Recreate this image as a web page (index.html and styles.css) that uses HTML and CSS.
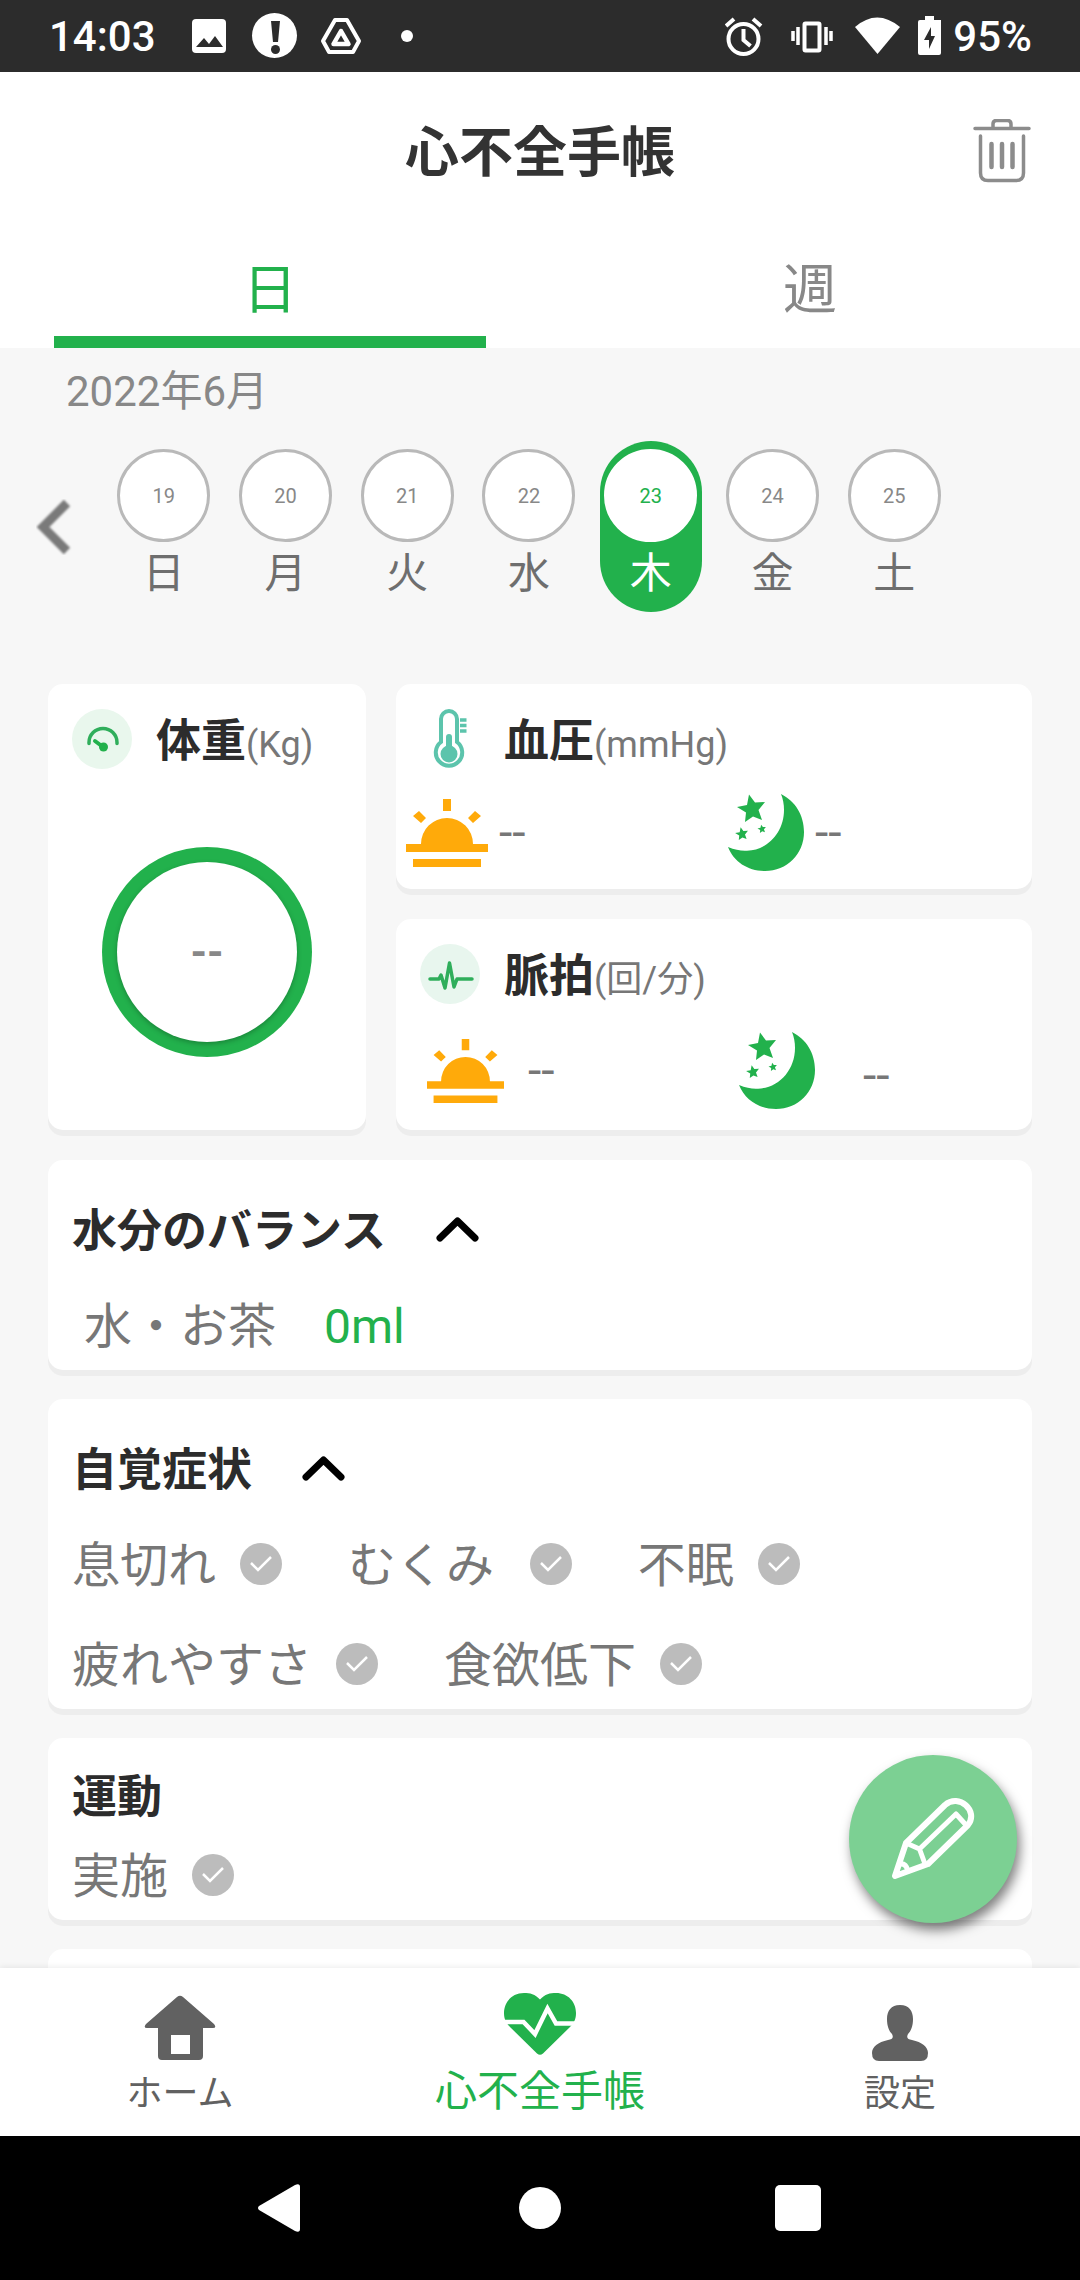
FILE: index.html
```html
<!DOCTYPE html>
<html lang="ja">
<head>
<meta charset="utf-8">
<meta name="viewport" content="width=device-width, initial-scale=1">
<title>心不全手帳</title>
<link rel="stylesheet" href="styles.css">
</head>
<body>
<svg class="defs" aria-hidden="true">
  <symbol id="sun" viewBox="0 0 82 68">
    <path fill="#ffaa0a" d="M37 0h8v12h-8zM7 17l6-5 7 7-5 5zM75 17l-6-5-7 7 5 5zM0 45h15a26 26 0 0 1 52 0h15v8H0zM7 60h68v8H7z"/>
  </symbol>
  <symbol id="moon" viewBox="0 0 76 77">
    <path fill="#22b14c" d="M53 0C67 7 76 21 76 38C76 60 59 77 37 77C20 77 6 68 0 53C7 56 13 57 19 56.700C40 56 56 38 56 16C56 10 55 5 53 0Z"/>
    <path id="star" fill="#22b14c" d="M21 .5L27 8.500L37 8L30.500 16L34 26L25 22.500L17 28L18 18.500L9 13L19 11Z"/>
    <use href="#star" transform="translate(14 40) scale(.46) translate(-24 -15)"/>
    <use href="#star" transform="translate(34 35) scale(.3) translate(-24 -15)"/>
  </symbol>
  <symbol id="chevron-up" viewBox="0 0 43 26">
    <path fill="none" stroke="#000" stroke-width="7" stroke-linecap="round" stroke-linejoin="round" d="M4 22L21.500 5L39 22"/>
  </symbol>
</svg>

<div class="status">
  <span class="clock">14:03</span>
  <svg class="status-left" width="222" height="48" viewBox="0 0 222 48" aria-hidden="true">
    <rect x="0" y="7" width="34" height="34" rx="4" fill="#fff"/>
    <path d="M4 35l8-9 5 6 6-8 8 11z" fill="#2c2c2c"/>
    <circle cx="82.500" cy="23.500" r="22.500" fill="#fff"/>
    <path d="M79 9h9l-2 21h-5z" fill="#2c2c2c"/><circle cx="83.500" cy="37.500" r="4.500" fill="#2c2c2c"/>
    <path d="M143 8h12l12 21-6 11h-24l-6-11z" fill="none" stroke="#fff" stroke-width="4" stroke-linejoin="round"/>
    <path d="M149 19l7.500 13h-15z" fill="none" stroke="#fff" stroke-width="4.500" stroke-linejoin="round"/>
    <circle cx="215" cy="24" r="6" fill="#fff"/>
  </svg>
  <svg class="status-right" width="216" height="48" viewBox="0 0 216 48" aria-hidden="true">
    <g fill="none" stroke="#fff" stroke-width="4">
      <circle cx="18.500" cy="27" r="15"/><path d="M18.500 17v11l7 6M1 14l8-7M36 14l-8-7"/>
      <rect x="79.500" y="11.500" width="15" height="27" rx="1"/>
      <path d="M73 15v18M68 19v10M101 15v18M106 19v10" stroke-width="3.500"/>
    </g>
    <path d="M130 15Q152 -4 175 15L152.500 42Z" fill="#fff"/>
    <path d="M200 4h9v4h7v33q0 2-2 2h-19q-2 0-2-2V10q0-2 2-2h5z" fill="#fff"/>
    <path d="M206 15l-7 13h5v9l6-13h-4z" fill="#2c2c2c"/>
  </svg>
  <span>95%</span>
</div>

<header class="appbar">
  <h1 class="title">心不全手帳</h1>
  <button class="trash" type="button" aria-label="削除">
    <svg width="58" height="64" viewBox="0 0 58 64">
      <g fill="none" stroke="#8c8c8c" stroke-linecap="round">
        <path d="M20 9V5q0-3.500 3.500-3.500h11q3.500 0 3.500 3.500v4M2 9.500h54" stroke-width="3.500"/>
        <path d="M7.500 17v37q0 7.500 7.500 7.500h28q7.500 0 7.500-7.500V17" stroke-width="3.500"/>
        <path d="M18.500 25v23M29 25v23M39.500 25v23" stroke-width="4.500"/>
      </g>
    </svg>
  </button>
</header>

<nav class="tabs">
  <button class="tab tab-active" type="button"><span class="tab-label">日</span></button>
  <button class="tab" type="button"><span class="tab-label">週</span></button>
</nav>

<main class="content">
  <h2 class="month">2022年6月</h2>
  <div class="week">
    <button class="prev" type="button" aria-label="前の週">
      <svg width="36" height="56" viewBox="0 0 36 56"><path class="prev-mark" d="M31 4L7 28L31 52"/></svg>
    </button>
    <div class="days">
      <button class="day" type="button"><span class="num">19</span><span class="dow">日</span></button>
      <button class="day" type="button"><span class="num">20</span><span class="dow">月</span></button>
      <button class="day" type="button"><span class="num">21</span><span class="dow">火</span></button>
      <button class="day" type="button"><span class="num">22</span><span class="dow">水</span></button>
      <button class="day day-active" type="button"><span class="num">23</span><span class="dow">木</span></button>
      <button class="day" type="button"><span class="num">24</span><span class="dow">金</span></button>
      <button class="day" type="button"><span class="num">25</span><span class="dow">土</span></button>
    </div>
  </div>

  <div class="vitals">
    <section class="card weight">
      <div class="vital-head">
        <svg width="60" height="60" viewBox="0 0 60 60" aria-hidden="true">
          <circle cx="30" cy="30" r="30" fill="#e9f7ed"/>
          <path d="M17 34.500v-1a14 14 0 0 1 28 0v1" fill="none" stroke="#2fae5b" stroke-width="3.500" stroke-linecap="round"/>
          <circle cx="31.500" cy="38" r="4.500" fill="#22b14c"/>
          <path d="M23 32l8 6" stroke="#22b14c" stroke-width="4" stroke-linecap="round"/>
        </svg>
        <h3 class="heading">体重<small class="unit">(Kg)</small></h3>
      </div>
      <div class="ring"><div class="ring-inner">--</div></div>
    </section>
    <section class="card pressure">
      <div class="vital-head">
        <svg width="60" height="60" viewBox="0 0 60 60" aria-hidden="true">
          <path d="M21 33V10a8 8 0 0 1 16 0v23a13.200 13.200 0 1 1-16 0z" fill="none" stroke="#5cc4ac" stroke-width="4"/>
          <path d="M29 28v14" stroke="#5cc4ac" stroke-width="6" stroke-linecap="round"/>
          <circle cx="29" cy="45" r="8.500" fill="#5cc4ac"/>
          <path d="M40 11h6.500M40 16.500h6.500M40 22h6.500" stroke="#5cc4ac" stroke-width="3.500"/>
        </svg>
        <h3 class="heading">血圧<small class="unit">(mmHg)</small></h3>
      </div>
      <div class="readings readings-tight">
        <div class="reading"><svg width="82" height="68" aria-label="朝"><use href="#sun"/></svg><span>--</span></div>
        <div class="reading"><svg width="76" height="77" aria-label="夜"><use href="#moon"/></svg><span>--</span></div>
      </div>
    </section>
    <section class="card pulse">
      <div class="vital-head">
        <svg width="60" height="60" viewBox="0 0 60 60" aria-hidden="true">
          <circle cx="30" cy="30" r="30" fill="#e8f6ee"/>
          <path d="M10 35h9l2-4 4 13 4.500-25 4.500 24 3-8h15" fill="none" stroke="#2fae5b" stroke-width="3.500" stroke-linecap="round" stroke-linejoin="round"/>
        </svg>
        <h3 class="heading">脈拍<small class="unit">(回/分)</small></h3>
      </div>
      <div class="readings readings-wide">
        <div class="reading"><svg width="77" height="64" aria-label="朝"><use href="#sun"/></svg><span>--</span></div>
        <div class="reading"><svg width="76" height="77" aria-label="夜"><use href="#moon"/></svg><span class="night-value">--</span></div>
      </div>
    </section>
  </div>

  <div class="records">
    <section class="card record">
      <button class="fold" type="button"><span class="heading">水分のバランス</span><svg width="43" height="26" aria-hidden="true"><use href="#chevron-up"/></svg></button>
      <p class="drink"><span>水・お茶</span><span class="amount">0ml</span></p>
    </section>
    <section class="card record">
      <button class="fold" type="button"><span class="heading">自覚症状</span><svg width="43" height="26" aria-hidden="true"><use href="#chevron-up"/></svg></button>
      <div class="checks">
        <label class="check"><span class="check-name">息切れ</span><input class="tick" type="checkbox"></label>
        <label class="check"><span class="check-name">むくみ&nbsp;</span><input class="tick" type="checkbox"></label>
        <label class="check"><span class="check-name">不眠</span><input class="tick" type="checkbox"></label>
      </div>
      <div class="checks">
        <label class="check"><span class="check-name">疲れやすさ</span><input class="tick" type="checkbox"></label>
        <label class="check"><span class="check-name">食欲低下</span><input class="tick" type="checkbox"></label>
      </div>
    </section>
    <section class="card record record-plain">
      <h3 class="heading">運動</h3>
      <div class="checks">
        <label class="check"><span class="check-name">実施</span><input class="tick" type="checkbox"></label>
      </div>
    </section>
    <section class="card record record-next"></section>
  </div>

  <button class="fab" type="button" aria-label="記録する">
    <svg width="84" height="84" viewBox="0 0 84 84">
      <g fill="none" stroke="#fff" stroke-width="6" stroke-linecap="round" stroke-linejoin="round">
        <path d="M4 79L15 46L54 8C68 -4 88 14 77 28L37 67Z"/>
        <path d="M15 46L28.500 52L34 67M28.500 52L65 17L75 28M9 67Q15 66 17 74" stroke-width="5"/>
      </g>
    </svg>
  </button>
</main>

<nav class="bottom">
  <a class="dest" href="#home">
    <svg width="72" height="66" viewBox="0 0 72 66" aria-hidden="true"><path fill="#616161" fill-rule="evenodd" d="M33 2q3-2.500 6 0l31 27q3 4-1 4H59v28q0 4-4 4H18q-4 0-4-4V33H3q-4 0-1-4zM27 40v19h19V40z"/></svg>
    <span>ホーム</span>
  </a>
  <a class="dest dest-active" href="#notebook">
    <svg width="72" height="62" viewBox="0 0 72 62" aria-hidden="true">
      <path fill="#22b14c" d="M36 6.500C41 1 46 0 52 0C64 0 72 9 72 20C72 26 70 30 66 34L39 60.500Q36 63 33 60.500L6 34C2 30 0 26 0 20C0 9 8 0 20 0C26 0 31 1 36 6.500Z"/>
      <path d="M-1 29H19.500L31 41L43.500 15.500L52 30.500H73" fill="none" stroke="#fff" stroke-width="4.500"/>
    </svg>
    <span>心不全手帳</span>
  </a>
  <a class="dest" href="#settings">
    <svg width="56" height="56" viewBox="0 0 56 56" aria-hidden="true"><path fill="#616161" d="M28 0C37 0 41 6 41 14C41 21 39 26 36 29C34 33 36 34 40 35C50 37 56 42 56 48Q56 56 49 56H7Q0 56 0 48C0 42 6 37 16 35C20 34 22 33 20 29C17 26 15 21 15 14C15 6 19 0 28 0Z"/></svg>
    <span>設定</span>
  </a>
</nav>

<nav class="sysnav">
  <button class="sys" type="button" aria-label="戻る"><svg width="50" height="50" viewBox="0 0 50 50"><path fill="#fff" d="M2 23L38 2q5-2 5 2v42q0 4-5 2L2 27q-2-2 0-4z"/></svg></button>
  <button class="sys" type="button" aria-label="ホーム画面"><svg width="42" height="42"><circle cx="21" cy="21" r="21" fill="#fff"/></svg></button>
  <button class="sys" type="button" aria-label="アプリ履歴"><svg width="46" height="46"><rect width="46" height="46" rx="5" fill="#fff"/></svg></button>
</nav>
</body>
</html>
```

FILE: styles.css
```css
* { box-sizing: border-box; }

body {
  margin: 0;
  height: 100vh;
  display: flex;
  flex-direction: column;
  overflow: hidden;
  background: #f7f7f7;
  color: #777;
  font-family: Roboto, "Noto Sans CJK JP", sans-serif;
}

h1, h2, h3, p { margin: 0; font-weight: 400; }
svg { display: block; flex: none; }
.defs { position: absolute; width: 0; height: 0; }

button {
  margin: 0;
  padding: 0;
  border: 0;
  background: none;
  color: inherit;
  font: inherit;
}

/* Status bar */
.status {
  flex: none;
  display: flex;
  align-items: center;
  height: 72px;
  padding: 0 48px 0 49px;
  background: #2c2c2c;
  color: #fff;
  font-size: 42px;
  font-weight: 500;
}
.status-left { margin-left: 36px; }
.status-right { margin: 0 12px 0 auto; }

/* App bar and tabs */
.appbar {
  flex: none;
  display: grid;
  grid-template-columns: 1fr auto 1fr;
  align-items: center;
  height: 158px;
  background: #fff;
}
.title {
  grid-column: 2;
  padding-top: 5px;
  color: #333;
  font-size: 54px;
  font-weight: 700;
  line-height: 60px;
}
.trash { justify-self: end; margin-right: 49px; }

.tabs {
  flex: none;
  display: grid;
  grid-template-columns: 1fr 1fr;
  background: #fff;
}
.tab { padding: 0 54px; color: #888; font-size: 54px; }
.tab-label {
  display: block;
  padding-top: 16px;
  border-bottom: 12px solid transparent;
  line-height: 90px;
}
.tab-active { color: #22b14c; }
.tab-active .tab-label { border-color: #22b14c; }

/* Scrolling area */
.content {
  position: relative;
  flex: 1;
  min-height: 0;
  overflow: hidden;
}
.month {
  padding: 14px 66px 0;
  color: #888;
  font-size: 42px;
  line-height: 60px;
}

.week { display: flex; margin-top: 19px; padding-right: 125px; }
.prev { width: 103px; padding-left: 36px; }
.prev-mark {
  fill: none;
  stroke: #7a7a7a;
  stroke-width: 9;
  filter: blur(1px);
}
.days {
  flex: 1;
  display: grid;
  grid-template-columns: repeat(7, 1fr);
  justify-items: center;
}
.day {
  display: flex;
  flex-direction: column;
  align-items: center;
  gap: 8px;
  width: 102px;
  padding: 8px 0 14px;
  border-radius: 51px;
}
.num {
  width: 93px;
  height: 93px;
  border: 3px solid #b9b9b9;
  border-radius: 50%;
  background: #fff;
  color: #888;
  font-size: 20px;
  line-height: 88px;
}
.dow { color: #6e6e6e; font-size: 42px; line-height: 48px; }
.day-active { background: #22b14c; }
.day-active .num { border-color: #fff; color: #22b14c; }
.day-active .dow { color: #fff; }

/* Cards */
.card {
  border-radius: 15px;
  background: #fff;
  box-shadow: 0 6px 0 #ededed;
}
.heading {
  color: #2c2c2c;
  font-size: 45px;
  font-weight: 700;
  line-height: 66px;
}
.unit { color: #777; font-size: 36px; font-weight: 400; }

.vitals {
  display: grid;
  grid-template-columns: 1fr 2fr;
  grid-template-rows: 205px 211px;
  gap: 30px;
  padding: 72px 48px 0;
}
.weight { grid-row: span 2; padding-top: 25px; }
.pressure, .pulse { display: flex; flex-direction: column; padding: 25px 0 18px; }
.vital-head {
  display: flex;
  align-items: flex-start;
  gap: 24px;
  height: 60px;
  padding-left: 24px;
}
.ring {
  width: 210px;
  height: 210px;
  margin: 78px auto 0;
  padding: 15px;
  border-radius: 50%;
  background: #22b14c;
}
.ring-inner {
  height: 180px;
  border-radius: 50%;
  background: #fff;
  box-shadow: 0 2px 5px rgba(0, 0, 0, .25);
  color: #888;
  font-size: 42px;
  font-weight: 700;
  line-height: 182px;
  text-align: center;
}
.readings {
  flex: 1;
  display: grid;
  grid-template-columns: 1fr 1fr;
  align-items: end;
  font-size: 48px;
}
.readings-wide { align-items: center; padding-top: 25px; }
.reading { display: flex; align-items: center; height: 77px; }
.readings-tight .reading { gap: 11px; padding-left: 10px; }
.readings-tight .reading + .reading { padding-left: 14px; }
.readings-wide .reading { gap: 24px; padding-left: 31px; }
.readings-wide .reading + .reading { gap: 48px; padding-left: 25px; }
.night-value { padding-top: 10px; }

.records { display: grid; gap: 29px; padding: 30px 48px 0; font-size: 48px; }
.record { padding: 39px 24px 15px; }
.record-plain { padding-top: 27px; }
.record-plain .checks { margin-top: 14px; }
.record-next { height: 200px; }
.fold { display: flex; align-items: center; gap: 50px; }
.fold svg { margin-bottom: 6px; }
.drink {
  display: flex;
  gap: 48px;
  height: 60px;
  margin-top: 30px;
  padding-left: 12px;
  line-height: 64px;
}
.amount { color: #22b14c; }
.checks { display: flex; gap: 66px; margin-top: 30px; }
.checks + .checks { margin-top: 40px; }
.check { display: flex; align-items: center; gap: 24px; height: 60px; }
.check-name { padding-top: 4px; line-height: 60px; }
.tick {
  appearance: none;
  width: 42px;
  height: 42px;
  margin: 0;
  border-radius: 50%;
  background: #bcbcbc url("data:image/svg+xml,%3Csvg xmlns='http://www.w3.org/2000/svg' viewBox='0 0 42 42'%3E%3Cpath d='M11 20l7 7L31 14' fill='none' stroke='%23fff' stroke-width='2.500'/%3E%3C/svg%3E");
}

/* Floating button */
.fab {
  position: absolute;
  right: 63px;
  bottom: 45px;
  display: flex;
  align-items: center;
  justify-content: center;
  width: 168px;
  height: 168px;
  border-radius: 50%;
  background: #7cd093;
  box-shadow: 3px 7px 12px rgba(0, 0, 0, .5);
}

/* Bottom navigation */
.bottom {
  flex: none;
  display: grid;
  grid-template-columns: repeat(3, 1fr);
  height: 168px;
  background: #fff;
  box-shadow: 0 -1px 6px rgba(0, 0, 0, .08);
  z-index: 1;
}
.dest {
  display: flex;
  flex-direction: column;
  align-items: center;
  justify-content: flex-end;
  gap: 9px;
  padding-bottom: 18px;
  color: #616161;
  font-size: 36px;
  line-height: 48px;
  text-decoration: none;
}
.dest-active { gap: 13px; padding-bottom: 20px; color: #22b14c; font-size: 42px; }

/* System navigation */
.sysnav {
  flex: none;
  display: grid;
  grid-template-columns: repeat(3, 258px);
  justify-content: center;
  height: 144px;
  background: #000;
}
.sys { display: grid; place-items: center; }
```
